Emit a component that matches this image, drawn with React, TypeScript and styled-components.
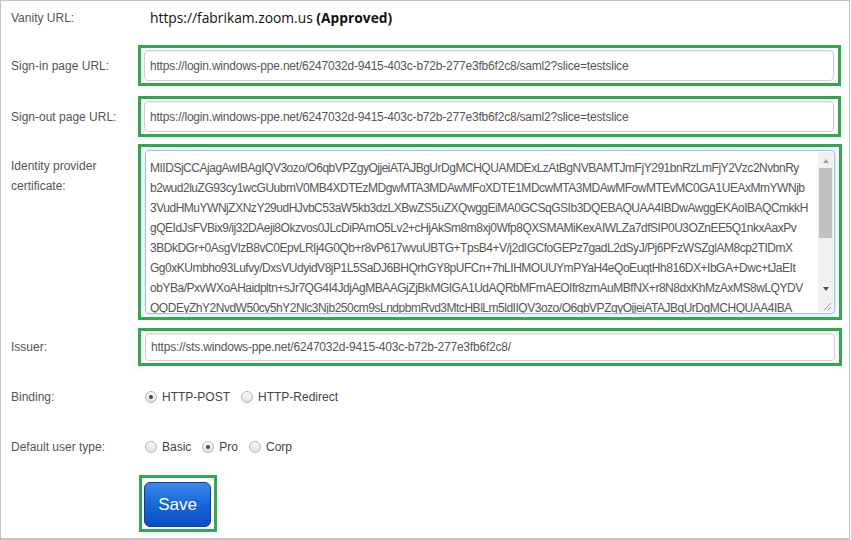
import React from "react";
import styled, { createGlobalStyle } from "styled-components";

const Global = createGlobalStyle`
  html, body { margin: 0; padding: 0; background: #fff; }
  body { font-family: "Liberation Sans", Arial, sans-serif; }
`;

const Frame = styled.div`
  box-sizing: border-box;
  width: 850px;
  height: 540px;
  border: 1px solid #c4c4c4;
  border-bottom-width: 2px;
  display: flex;
  flex-direction: column;
  overflow: hidden;
`;

const Row = styled.div<{ $mt?: number; $h?: number; $top?: boolean }>`
  display: flex;
  align-items: ${(p) => (p.$top ? "flex-start" : "center")};
  margin-top: ${(p) => p.$mt ?? 0}px;
  ${(p) => (p.$h ? `height: ${p.$h}px;` : "")}
`;

const Label = styled.div<{ $pt?: number }>`
  box-sizing: border-box;
  width: 137px;
  flex: none;
  padding-left: 10px;
  padding-top: ${(p) => p.$pt ?? 0}px;
  font-size: 12px;
  line-height: 20px;
  color: #555;
`;

const Vanity = styled.div`
  padding-left: 12px;
  margin-top: -2px;
  font-family: "Open Sans", "Noto Sans", sans-serif;
  font-size: 13.8px;
  color: #111;
  b { font-weight: 700; }
`;

const Highlight = styled.div<{ $w?: number; $pad?: string }>`
  box-sizing: border-box;
  width: ${(p) => p.$w ?? 703}px;
  border: 3px solid #2eaa4c;
  padding: ${(p) => p.$pad ?? "2px 4px 2px 3px"};
`;

const Input = styled.div<{ $h?: number }>`
  box-sizing: border-box;
  height: ${(p) => p.$h ?? 31}px;
  border: 1px solid #cfcfcf;
  border-radius: 4px;
  box-shadow: inset 0 1px 1px rgba(0, 0, 0, 0.06);
  padding: 0 5px;
  display: flex;
  align-items: center;
  font-size: 12px;
  letter-spacing: -0.2px;
  color: #555;
  white-space: nowrap;
  overflow: hidden;
`;

const CertArea = styled.div`
  position: relative;
  box-sizing: border-box;
  height: 164px;
  border: 1px solid #9ec3e6;
  border-radius: 4px;
  box-shadow: 0 0 4px rgba(102, 175, 233, 0.45);
  padding: 7px 20px 0 4px;
  overflow: hidden;
  font-size: 12px;
  letter-spacing: -0.48px;
  line-height: 20px;
  color: #555;
  white-space: pre;
`;

const ScrollTrack = styled.div`
  position: absolute;
  right: 1px;
  top: 1px;
  bottom: 16px;
  width: 15px;
  background: #f1f1f1;
  display: flex;
  flex-direction: column;
  align-items: center;
`;

const Arrow = styled.div<{ $down?: boolean }>`
  width: 0;
  height: 0;
  margin: 7px 0 5px;
  border-left: 3.5px solid transparent;
  border-right: 3.5px solid transparent;
  ${(p) =>
    p.$down
      ? "border-top: 4px solid #505050; margin: auto 0 6px;"
      : "border-bottom: 4px solid #a3a3a3;"}
`;

const Thumb = styled.div`
  width: 13px;
  height: 70px;
  background: #c1c1c1;
`;

const Grip = styled.div`
  position: absolute;
  right: 1px;
  bottom: 1px;
  width: 15px;
  height: 15px;
  background: #f1f1f1;
  svg { display: block; }
`;

const RadioGroup = styled.div`
  display: flex;
  align-items: center;
  padding-left: 7px;
  font-size: 12px;
  color: #444;
`;

const RadioItem = styled.label`
  display: flex;
  align-items: center;
  margin-right: 11px;
`;

const RadioDot = styled.span<{ $on?: boolean }>`
  box-sizing: border-box;
  width: 12px;
  height: 12px;
  border-radius: 50%;
  border: 1px solid #b5b5b5;
  background: linear-gradient(#fafafa, #e2e2e2);
  margin-right: 5px;
  display: flex;
  align-items: center;
  justify-content: center;
  &::after {
    content: "";
    width: 4px;
    height: 4px;
    border-radius: 50%;
    background: ${(p) => (p.$on ? "#444" : "transparent")};
  }
`;

const SaveWrap = styled.div`
  box-sizing: border-box;
  width: 78px;
  margin-left: 138px;
  border: 3px solid #2eaa4c;
  padding: 4px 3px 2px 2px;
`;

const SaveButton = styled.button`
  box-sizing: border-box;
  width: 67px;
  height: 45px;
  border: 1px solid #0b3f99;
  border-radius: 6px;
  background: linear-gradient(#3a8ae8 0%, #1866d8 50%, #0b4fc4 100%);
  color: #fff;
  font-family: "Liberation Sans", Arial, sans-serif;
  font-size: 17px;
  padding: 0;
`;

const certLines = [
  "MIIDSjCCAjagAwIBAgIQV3ozo/O6qbVPZgyOjjeiATAJBgUrDgMCHQUAMDExLzAtBgNVBAMTJmFjY291bnRzLmFjY2Vzc2NvbnRy",
  "b2wud2luZG93cy1wcGUubmV0MB4XDTEzMDgwMTA3MDAwMFoXDTE1MDcwMTA3MDAwMFowMTEvMC0GA1UEAxMmYWNjb",
  "3VudHMuYWNjZXNzY29udHJvbC53aW5kb3dzLXBwZS5uZXQwggEiMA0GCSqGSIb3DQEBAQUAA4IBDwAwggEKAoIBAQCmkkH",
  "gQEIdJsFVBix9/ij32DAeji8Okzvos0JLcDiPAmO5Lv2+cHjAkSm8m8xj0Wfp8QXSMAMiKexAIWLZa7dfSIP0U3OZnEE5Q1nkxAaxPv",
  "3BDkDGr+0AsgVIzB8vC0EpvLRIj4G0Qb+r8vP617wvuUBTG+TpsB4+V/j2dIGCfoGEPz7gadL2dSyJ/Pj6PFzWSZglAM8cp2TIDmX",
  "Gg0xKUmbho93Lufvy/DxsVUdyidV8jP1L5SaDJ6BHQrhGY8pUFCn+7hLIHMOUUYmPYaH4eQoEuqtHh816DX+IbGA+Dwc+tJaEIt",
  "obYBa/PxvWXoAHaidpltn+sJr7QG4I4JdjAgMBAAGjZjBkMGIGA1UdAQRbMFmAEOIfr8zmAuMBfNX+r8N8dxKhMzAxMS8wLQYDV",
  "QQDEyZhY2NvdW50cy5hY2Nlc3Njb250cm9sLndpbmRvd3MtcHBlLm5ldIIQV3ozo/O6qbVPZgyOjjeiATAJBgUrDgMCHQUAA4IBA",
];

const url =
  "https://login.windows-ppe.net/6247032d-9415-403c-b72b-277e3fb6f2c8/saml2?slice=testslice";

export default function App() {
  return (
    <>
      <Global />
      <Frame>
        <Row $h={34}>
          <Label>Vanity URL:</Label>
          <Vanity>
            https://fabrikam.zoom.us <b>(Approved)</b>
          </Vanity>
        </Row>
        <Row $mt={10}>
          <Label>Sign-in page URL:</Label>
          <Highlight $w={703}>
            <Input>{url}</Input>
          </Highlight>
        </Row>
        <Row $mt={10}>
          <Label>Sign-out page URL:</Label>
          <Highlight $w={703}>
            <Input>{url}</Input>
          </Highlight>
        </Row>
        <Row $mt={7} $top>
          <Label $pt={12}>
            Identity provider
            <br />
            certificate:
          </Label>
          <Highlight $w={704} $pad="3px 4px 3px 4px">
            <CertArea>
              {certLines.join("\n")}
              <ScrollTrack>
                <Arrow />
                <Thumb />
                <Arrow $down />
              </ScrollTrack>
              <Grip>
                <svg width="15" height="15" viewBox="0 0 15 15">
                  <path d="M13 6 L6 13 M13 10 L10 13" stroke="#9a9a9a" strokeWidth="1" />
                </svg>
              </Grip>
            </CertArea>
          </Highlight>
        </Row>
        <Row $mt={8}>
          <Label>Issuer:</Label>
          <Highlight $w={704} $pad="2px 4px 2px 4px">
            <Input $h={28}>https://sts.windows-ppe.net/6247032d-9415-403c-b72b-277e3fb6f2c8/</Input>
          </Highlight>
        </Row>
        <Row $mt={16} $h={30}>
          <Label>Binding:</Label>
          <RadioGroup>
            <RadioItem>
              <RadioDot $on />
              HTTP-POST
            </RadioItem>
            <RadioItem>
              <RadioDot />
              HTTP-Redirect
            </RadioItem>
          </RadioGroup>
        </Row>
        <Row $mt={20} $h={30}>
          <Label>Default user type:</Label>
          <RadioGroup>
            <RadioItem>
              <RadioDot />
              Basic
            </RadioItem>
            <RadioItem>
              <RadioDot $on />
              Pro
            </RadioItem>
            <RadioItem>
              <RadioDot />
              Corp
            </RadioItem>
          </RadioGroup>
        </Row>
        <Row $mt={13}>
          <SaveWrap>
            <SaveButton>Save</SaveButton>
          </SaveWrap>
        </Row>
      </Frame>
    </>
  );
}
